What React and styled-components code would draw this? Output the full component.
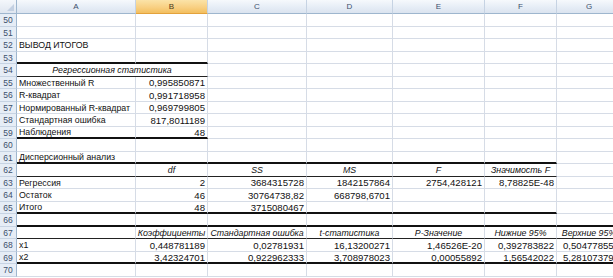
import React from "react";
import styled, { createGlobalStyle, css } from "styled-components";

const GlobalStyle = createGlobalStyle`
  html, body {
    margin: 0;
    padding: 0;
    background: #fff;
    overflow: hidden;
  }
  body {
    font-family: "Liberation Sans", Arial, sans-serif;
  }
`;

const COLS = ["A", "B", "C", "D", "E", "F", "G"];
const ROW_H = 12.5;

const Sheet = styled.div`
  display: grid;
  grid-template-columns: 17px 119px 72px 99px 86px 92px 72px 65px;
  grid-auto-rows: ${ROW_H}px;
  grid-template-rows: 14px;
  width: 640px;
`;

const Corner = styled.div`
  position: relative;
  background: linear-gradient(#f4f7fb, #dfe6f0);
  border-right: 1px solid #9eb6ce;
  border-bottom: 1px solid #9eb6ce;
  box-sizing: border-box;

  &::after {
    content: "";
    position: absolute;
    right: 2px;
    bottom: 2px;
    border-style: solid;
    border-width: 0 0 7px 7px;
    border-color: transparent transparent #c3d0e2 transparent;
  }
`;

const ColHead = styled.div`
  box-sizing: border-box;
  display: flex;
  align-items: center;
  justify-content: center;
  font-size: 8px;
  color: #3c4f6b;
  border-right: 1px solid #c6d3e3;
  border-bottom: 1px solid #9eb6ce;
  background: linear-gradient(#f6f9fc 0%, #e6edf6 55%, #dbe4ef 100%);

  ${(p) =>
    p.$active &&
    css`
      background: linear-gradient(#fbe3a8 0%, #f8d083 55%, #f3bf5f 100%);
      border-bottom-color: #e3a23c;
      color: #4a3a1a;
    `}
`;

const RowHead = styled.div`
  box-sizing: border-box;
  display: flex;
  align-items: center;
  justify-content: center;
  padding-top: 1px;
  font-size: 8.5px;
  color: #3c4f6b;
  background: #e6edf6;
  border-right: 1px solid #9eb6ce;
  border-bottom: 1px solid #c6d3e3;
`;

const Cell = styled.div`
  box-sizing: border-box;
  display: flex;
  align-items: center;
  justify-content: ${(p) =>
    p.$align === "right" ? "flex-end" : p.$align === "center" ? "center" : "flex-start"};
  grid-column: span ${(p) => p.$span || 1};
  padding: 1px 2px 0;
  white-space: nowrap;
  color: #111;
  font-size: ${(p) => (p.$num ? "9.6px" : "8.8px")};
  font-style: ${(p) => (p.$italic ? "italic" : "normal")};
  border-right: 1px solid #d6dce6;
  border-bottom: ${(p) =>
    p.$rule === "thick"
      ? "2px solid #111"
      : p.$rule === "thin"
      ? "1px solid #222"
      : "1px solid #d6dce6"};
`;

// kind: t = text, n = number, h = italic heading (centered)
const rows = [
  { n: 50 },
  { n: 51 },
  { n: 52, cells: { A: ["t", "ВЫВОД ИТОГОВ"] } },
  { n: 53, rule: ["thick", 2] },
  { n: 54, rule: ["thin", 2], merge: ["h", "Регрессионная статистика"] },
  { n: 55, cells: { A: ["t", "Множественный R"], B: ["n", "0,995850871"] } },
  { n: 56, cells: { A: ["t", "R-квадрат"], B: ["n", "0,991718958"] } },
  { n: 57, cells: { A: ["t", "Нормированный R-квадрат"], B: ["n", "0,969799805"] } },
  { n: 58, cells: { A: ["t", "Стандартная ошибка"], B: ["n", "817,8011189"] } },
  { n: 59, rule: ["thick", 2], cells: { A: ["t", "Наблюдения"], B: ["n", "48"] } },
  { n: 60 },
  { n: 61, rule: ["thick", 6], cells: { A: ["t", "Дисперсионный анализ"] } },
  {
    n: 62,
    rule: ["thin", 6],
    cells: { B: ["h", "df"], C: ["h", "SS"], D: ["h", "MS"], E: ["h", "F"], F: ["h", "Значимость F"] },
  },
  {
    n: 63,
    cells: {
      A: ["t", "Регрессия"],
      B: ["n", "2"],
      C: ["n", "3684315728"],
      D: ["n", "1842157864"],
      E: ["n", "2754,428121"],
      F: ["n", "8,78825E-48"],
    },
  },
  {
    n: 64,
    cells: { A: ["t", "Остаток"], B: ["n", "46"], C: ["n", "30764738,82"], D: ["n", "668798,6701"] },
  },
  { n: 65, rule: ["thick", 6], cells: { A: ["t", "Итого"], B: ["n", "48"], C: ["n", "3715080467"] } },
  { n: 66, rule: ["thick", 7] },
  {
    n: 67,
    rule: ["thin", 7],
    cells: {
      B: ["h", "Коэффициенты"],
      C: ["h", "Стандартная ошибка"],
      D: ["h", "t-статистика"],
      E: ["h", "P-Значение"],
      F: ["h", "Нижние 95%"],
      G: ["h", "Верхние 95%"],
    },
  },
  {
    n: 68,
    cells: {
      A: ["t", "x1"],
      B: ["n", "0,448781189"],
      C: ["n", "0,02781931"],
      D: ["n", "16,13200271"],
      E: ["n", "1,46526E-20"],
      F: ["n", "0,392783822"],
      G: ["n", "0,504778556"],
    },
  },
  {
    n: 69,
    rule: ["thick", 7],
    cells: {
      A: ["t", "x2"],
      B: ["n", "3,42324701"],
      C: ["n", "0,922962333"],
      D: ["n", "3,708978023"],
      E: ["n", "0,00055892"],
      F: ["n", "1,56542022"],
      G: ["n", "5,281073799"],
    },
  },
  { n: 70 },
];

const renderValue = (entry, key, rule, span) => {
  const [kind, text] = entry || [];
  return (
    <Cell
      key={key}
      $span={span}
      $rule={rule}
      $num={kind === "n"}
      $italic={kind === "h"}
      $align={kind === "n" ? "right" : kind === "h" ? "center" : "left"}
    >
      {text}
    </Cell>
  );
};

const SheetRow = ({ row }) => {
  const [ruleType, ruleCols] = row.rule || [null, 0];
  const out = [<RowHead key="h">{row.n}</RowHead>];

  COLS.forEach((col, i) => {
    if (row.merge && i === 1) return;
    const rule = i < ruleCols ? ruleType : null;
    if (row.merge && i === 0) {
      out.push(renderValue(row.merge, col, rule, 2));
      return;
    }
    out.push(renderValue(row.cells && row.cells[col], col, rule));
  });

  return out;
};

export default function App() {
  return (
    <>
      <GlobalStyle />
      <Sheet>
        <Corner />
        {COLS.map((c) => (
          <ColHead key={c} $active={c === "B"}>
            {c}
          </ColHead>
        ))}
        {rows.map((row) => (
          <SheetRow key={row.n} row={row} />
        ))}
      </Sheet>
    </>
  );
}
